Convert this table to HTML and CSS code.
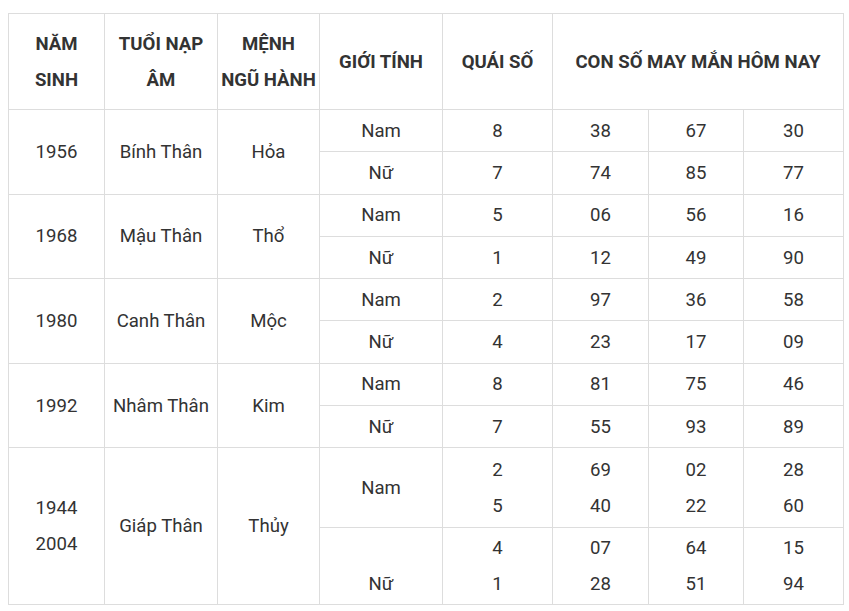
FILE: index.html
```html
<!DOCTYPE html>
<html lang="vi">
<head>
<meta charset="utf-8">
<link rel="stylesheet" href="styles.css">
</head>
<body>
<table class="lucky">
  <colgroup>
    <col class="c1"><col class="c2"><col class="c3"><col class="c4"><col class="c5"><col class="c6"><col class="c7"><col class="c8">
  </colgroup>
  <thead>
    <tr class="head">
      <th>NĂM<br>SINH</th>
      <th>TUỔI NẠP<br>ÂM</th>
      <th>MỆNH<br>NGŨ HÀNH</th>
      <th>GIỚI TÍNH</th>
      <th>QUÁI SỐ</th>
      <th colspan="3">CON SỐ MAY MẮN HÔM NAY</th>
    </tr>
  </thead>
  <tbody>
    <tr class="r"><td rowspan="2">1956</td><td rowspan="2">Bính Thân</td><td rowspan="2">Hỏa</td><td>Nam</td><td>8</td><td>38</td><td>67</td><td>30</td></tr>
    <tr class="r"><td>Nữ</td><td>7</td><td>74</td><td>85</td><td>77</td></tr>
    <tr class="r"><td rowspan="2">1968</td><td rowspan="2">Mậu Thân</td><td rowspan="2">Thổ</td><td>Nam</td><td>5</td><td>06</td><td>56</td><td>16</td></tr>
    <tr class="r"><td>Nữ</td><td>1</td><td>12</td><td>49</td><td>90</td></tr>
    <tr class="r"><td rowspan="2">1980</td><td rowspan="2">Canh Thân</td><td rowspan="2">Mộc</td><td>Nam</td><td>2</td><td>97</td><td>36</td><td>58</td></tr>
    <tr class="r"><td>Nữ</td><td>4</td><td>23</td><td>17</td><td>09</td></tr>
    <tr class="r"><td rowspan="2">1992</td><td rowspan="2">Nhâm Thân</td><td rowspan="2">Kim</td><td>Nam</td><td>8</td><td>81</td><td>75</td><td>46</td></tr>
    <tr class="r"><td>Nữ</td><td>7</td><td>55</td><td>93</td><td>89</td></tr>
    <tr class="r-nam"><td rowspan="2">1944<br>2004</td><td rowspan="2">Giáp Thân</td><td rowspan="2">Thủy</td><td>Nam</td><td>2<br>5</td><td>69<br>40</td><td>02<br>22</td><td>28<br>60</td></tr>
    <tr class="r-nu"><td><br>Nữ</td><td>4<br>1</td><td>07<br>28</td><td>64<br>51</td><td>15<br>94</td></tr>
  </tbody>
</table>
</body>
</html>
```
FILE: styles.css
```css
html, body {
  margin: 0;
  padding: 0;
  background: #fff;
}
body {
  padding: 13px 0 0 8px;
  font-family: Roboto, "Liberation Sans", sans-serif;
  color: #333;
}
.lucky {
  border-collapse: collapse;
  table-layout: fixed;
  width: 836px;
  font-size: 18.6px;
  line-height: 36px;
}
.c1 { width: 96px; }
.c2 { width: 113px; }
.c3 { width: 102px; }
.c4 { width: 123px; }
.c5 { width: 110px; }
.c6 { width: 96px; }
.c7 { width: 95px; }
.c8 { width: 100px; }
.lucky th,
.lucky td {
  border: 1px solid #ddd;
  padding: 0;
  text-align: center;
  vertical-align: middle;
  white-space: nowrap;
}
.lucky th {
  font-weight: 700;
  color: #333;
}
.head { height: 96px; }
.r { height: 42.3px; }
.r-nam { height: 80px; }
.r-nu { height: 77px; }
```
